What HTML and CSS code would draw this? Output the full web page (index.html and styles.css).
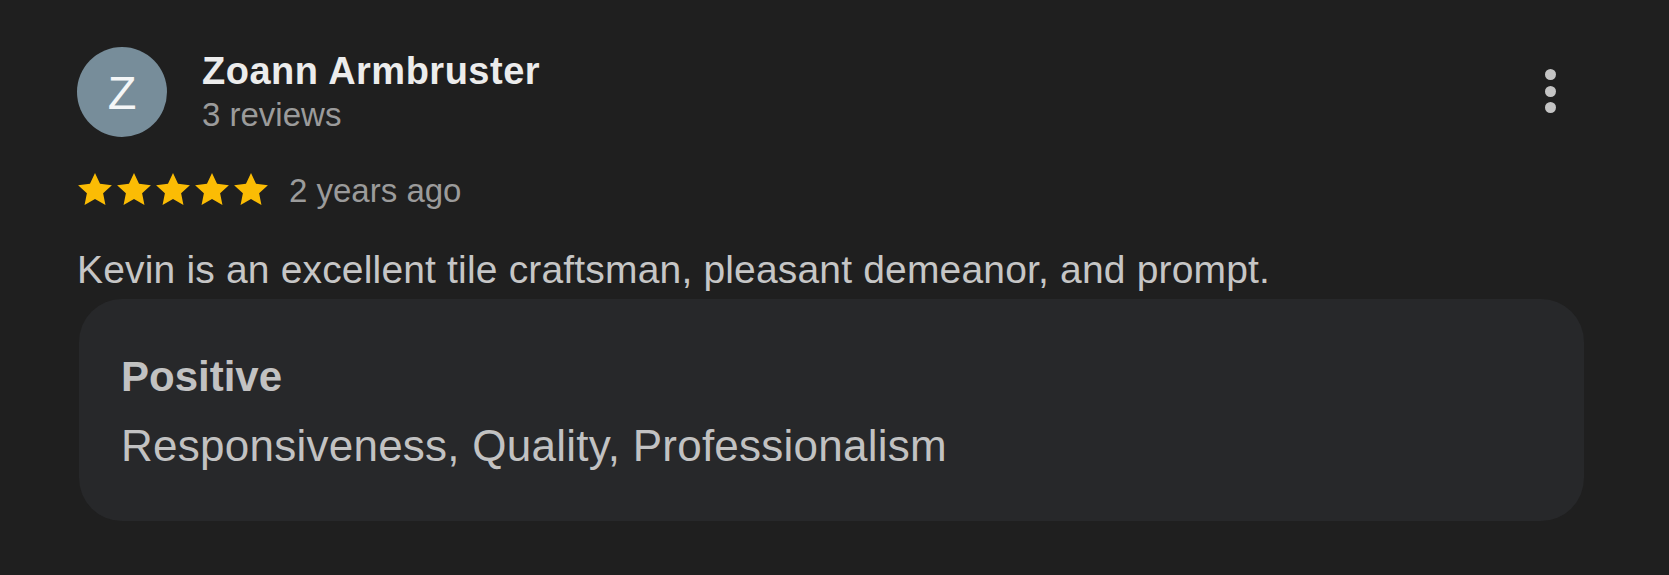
FILE: index.html
```html
<!DOCTYPE html>
<html>
<head>
<meta charset="utf-8">
<link rel="stylesheet" href="styles.css">
</head>
<body>
<div class="review">
  <div class="header">
    <div class="avatar">Z</div>
    <div class="who">
      <div class="name">Zoann Armbruster</div>
      <div class="count">3 reviews</div>
    </div>
    <div class="more" aria-label="More">
      <span class="dot"></span><span class="dot"></span><span class="dot"></span>
    </div>
  </div>
  <div class="meta">
    <div class="stars">
      <svg viewBox="2.07 2.2 19.86 18.8" class="star"><path d="M12 2.2l2.95 6.36 6.98.8-5.17 4.75 1.38 6.88L12 17.5l-6.14 3.49 1.38-6.88L2.07 9.36l6.98-.8z"/></svg>
      <svg viewBox="2.07 2.2 19.86 18.8" class="star"><path d="M12 2.2l2.95 6.36 6.98.8-5.17 4.75 1.38 6.88L12 17.5l-6.14 3.49 1.38-6.88L2.07 9.36l6.98-.8z"/></svg>
      <svg viewBox="2.07 2.2 19.86 18.8" class="star"><path d="M12 2.2l2.95 6.36 6.98.8-5.17 4.75 1.38 6.88L12 17.5l-6.14 3.49 1.38-6.88L2.07 9.36l6.98-.8z"/></svg>
      <svg viewBox="2.07 2.2 19.86 18.8" class="star"><path d="M12 2.2l2.95 6.36 6.98.8-5.17 4.75 1.38 6.88L12 17.5l-6.14 3.49 1.38-6.88L2.07 9.36l6.98-.8z"/></svg>
      <svg viewBox="2.07 2.2 19.86 18.8" class="star"><path d="M12 2.2l2.95 6.36 6.98.8-5.17 4.75 1.38 6.88L12 17.5l-6.14 3.49 1.38-6.88L2.07 9.36l6.98-.8z"/></svg>
    </div>
    <span class="when">2 years ago</span>
  </div>
  <p class="text">Kevin is an excellent tile craftsman, pleasant demeanor, and prompt.</p>
  <div class="card">
    <div class="card-title">Positive</div>
    <div class="card-body">Responsiveness, Quality, Professionalism</div>
  </div>
</div>
</body>
</html>
```
FILE: styles.css
```css
html, body {
  margin: 0;
  padding: 0;
  background: #1f1f1f;
}
body {
  font-family: "Liberation Sans", Arial, sans-serif;
  width: 1669px;
  height: 575px;
  overflow: hidden;
}
.review {
  padding: 47px 0 0 77px;
  width: 1507px;
}
.header {
  display: flex;
  align-items: flex-start;
}
.avatar {
  width: 90px;
  height: 90px;
  border-radius: 50%;
  background: #778d9a;
  color: #f4f6f7;
  font-size: 47px;
  line-height: 1;
  display: flex;
  align-items: center;
  justify-content: center;
  flex: none;
}
.who {
  margin-left: 35px;
  flex: 1;
}
.name {
  color: #ececec;
  font-weight: bold;
  font-size: 38px;
  letter-spacing: 0.5px;
  line-height: 42px;
  margin-top: 3px;
}
.count {
  color: #9b9b9b;
  font-size: 33px;
  line-height: 40px;
  margin-top: 3px;
}
.more {
  display: flex;
  flex-direction: column;
  align-items: center;
  gap: 5.5px;
  margin-top: 22px;
  margin-right: 28px;
}
.dot {
  width: 11px;
  height: 11px;
  border-radius: 50%;
  background: #c4c4c4;
}
.meta {
  display: flex;
  align-items: flex-start;
  margin-top: 36px;
}
.stars {
  display: flex;
  gap: 5px;
  margin-left: 1px;
}
.star {
  display: block;
  width: 34px;
  height: 32px;
  fill: #fbbc04;
}
.when {
  color: #9b9b9b;
  font-size: 33px;
  line-height: 32px;
  margin: 2px 0 0 21px;
}
.text {
  margin: 40px 0 0 0;
  color: #c6c6c6;
  font-size: 39px;
  letter-spacing: 0.17px;
  line-height: 46px;
}
.card {
  margin: 6px 0 0 2px;
  background: #27282a;
  border-radius: 43px;
  height: 222px;
  box-sizing: border-box;
  padding: 53px 42px 0;
}
.card-title {
  color: #c2c2c2;
  font-size: 42px;
  font-weight: bold;
  line-height: 50px;
}
.card-body {
  color: #c2c2c2;
  font-size: 44px;
  letter-spacing: 0.25px;
  line-height: 52px;
  margin-top: 18px;
}
```
